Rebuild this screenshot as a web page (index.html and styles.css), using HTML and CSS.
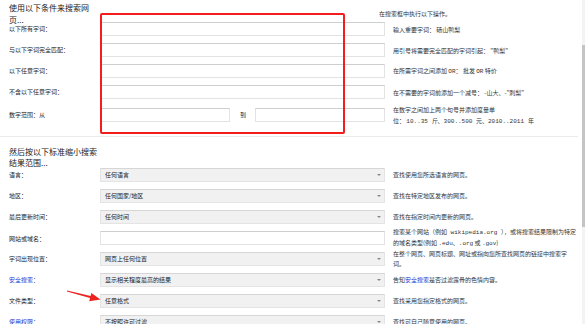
FILE: index.html
```html
<!DOCTYPE html>
<html lang="zh-CN">
<head>
    <meta charset="UTF-8">
    <meta name="viewport" content="width=device-width, initial-scale=1.0">
    <title>高级搜索</title>
    <link rel="stylesheet" href="styles.css">
</head>
<body>
    <div class="page">
        <div class="head-row first">
            <h3 class="section-title">使用以下条件来搜索网页...</h3>
            <div></div>
            <div class="head-note">在搜索框中执行以下操作。</div>
        </div>

        <div class="row shifted">
            <label class="label">以下所有字词：</label>
            <input type="text" class="field">
            <div class="note">输入重要字词： 砀山鸭梨</div>
        </div>
        <div class="row shifted">
            <label class="label">与以下字词完全匹配：</label>
            <input type="text" class="field">
            <div class="note">用引号将需要完全匹配的字词引起： "鸭梨"</div>
        </div>
        <div class="row shifted">
            <label class="label">以下任意字词：</label>
            <input type="text" class="field">
            <div class="note">在所需字词之间添加 <span class="mono">OR</span>： 批发 <span class="mono">OR</span> 特价</div>
        </div>
        <div class="row shifted">
            <label class="label">不含以下任意字词：</label>
            <input type="text" class="field">
            <div class="note">在不需要的字词前添加一个减号： -山大、-"刺梨"</div>
        </div>
        <div class="row shifted">
            <label class="label">数字范围：从</label>
            <div class="range">
                <input type="text" class="field">
                <span class="range-to">到</span>
                <input type="text" class="field">
            </div>
            <div class="note">在数字之间加上两个句号并添加度量单<span class="keep">位： <span class="mono">10..35 斤</span>、<span class="mono">300..500 元</span>、<span class="mono">2010..2011 年</span></span></div>
        </div>

        <hr class="divider">

        <div class="head-row second">
            <h3 class="section-title">然后按以下标准缩小搜索结果范围...</h3>
        </div>

        <div class="row">
            <label class="label">语言：</label>
            <div class="select"><span>任何语言</span><i class="caret"></i></div>
            <div class="note">查找使用您所选语言的网页。</div>
        </div>
        <div class="row">
            <label class="label">地区：</label>
            <div class="select"><span>任何国家/地区</span><i class="caret"></i></div>
            <div class="note">查找在特定地区发布的网页。</div>
        </div>
        <div class="row">
            <label class="label">最后更新时间：</label>
            <div class="select"><span>任何时间</span><i class="caret"></i></div>
            <div class="note">查找在指定时间内更新的网页。</div>
        </div>
        <div class="row">
            <label class="label">网站或域名：</label>
            <input type="text" class="field">
            <div class="note">搜索某个网站（例如<span class="mono"> wikipedia.org </span>），或将搜索结果限制为特定的域名类型(例如 <span class="mono">.edu</span>、<span class="mono">.org</span> 或 <span class="mono">.gov</span>)</div>
        </div>
        <div class="row">
            <label class="label">字词出现位置：</label>
            <div class="select"><span>网页上任何位置</span><i class="caret"></i></div>
            <div class="note">在整个网页、网页标题、网址或指向您所查找网页的链接中搜索字词。</div>
        </div>
        <div class="row">
            <a class="label link" href="#">安全搜索：</a>
            <div class="select"><span>显示相关程度最高的结果</span><i class="caret"></i></div>
            <div class="note">告知<a class="link" href="#">安全搜索</a>是否过滤露骨的色情内容。</div>
        </div>
        <div class="row">
            <label class="label">文件类型：</label>
            <div class="select"><span>任意格式</span><i class="caret"></i></div>
            <div class="note">查找采用您指定格式的网页。</div>
        </div>
        <div class="row">
            <a class="label link" href="#">使用权限：</a>
            <div class="select"><span>不按照许可过滤</span><i class="caret"></i></div>
            <div class="note">查找可自己随意使用的网页。</div>
        </div>
    </div>

    <!-- annotations drawn over the page -->
    <div class="highlight"></div>
    <svg class="arrow" width="45" height="22" viewBox="0 0 45 22">
        <polygon points="7.1,6.6 30.6,12 31.4,8.9 40.5,15.6 29.2,17.2 30,14 6.9,7.4" fill="#ec2320"/>
    </svg>

    <div class="scrollbar"><div class="thumb"></div></div>
</body>
</html>
```

FILE: styles.css
```css
body {
    margin: 0;
    height: 324px;
    overflow: hidden;
    background: #fff;
    font-family: "Noto Sans CJK SC", "Liberation Sans", sans-serif;
    color: #222;
}
.page {
    width: 578px;
    box-sizing: border-box;
    padding-left: 9px;
}
.head-row,
.row {
    display: grid;
    grid-template-columns: 91px 285px 1fr;
    align-items: center;
}
.head-row.first {
    height: 18px;
}
.head-row.second {
    height: 27px;
    align-items: start;
}
.section-title {
    margin: 0;
    font-size: 8px;
    font-weight: normal;
    line-height: 11.5px;
    color: #222;
    align-self: start;
}
.first .section-title {
    padding-top: 2px;
}
.second .section-title {
    padding-top: 9px;
    line-height: 11px;
}
.head-note {
    font-size: 6px;
    color: #333;
    margin-left: -6px;
    padding-top: 1px;
}
.row {
    height: 21px;
}
.label {
    font-size: 6px;
    color: #222;
    text-decoration: none;
}
.link {
    color: #2436d0;
    text-decoration: none;
}
.field {
    box-sizing: border-box;
    height: 14px;
    width: 100%;
    margin: 0;
    padding: 0 4px;
    border: 1px solid #e3e3e3;
    border-top-color: #cfcfcf;
    background: #fff;
    font-size: 6px;
}
.range {
    display: flex;
    align-items: center;
}
.range .field {
    flex: 1;
}
.range-to {
    font-size: 6px;
    margin: 0 9px 0 10px;
}
.select {
    box-sizing: border-box;
    height: 14px;
    display: flex;
    align-items: center;
    justify-content: space-between;
    padding: 0 3px 0 4px;
    border: 1px solid #e4e4e4;
    border-top-color: #d6d6d6;
    background: #f1f1f1;
    font-size: 6px;
    color: #222;
}
.caret {
    width: 0;
    height: 0;
    border-left: 2px solid transparent;
    border-right: 2px solid transparent;
    border-top: 2.5px solid #888;
}
.note {
    font-size: 6px;
    line-height: 10px;
    color: #333;
    padding-left: 8px;
}
.shifted .note {
    padding-top: 3px;
    line-height: 10.5px;
}
.mono {
    font-family: "Liberation Mono", monospace;
}
.keep {
    white-space: nowrap;
}
.divider {
    margin: 13px 0 0 -9px;
    border: 0;
    border-top: 1px solid #ebebeb;
}
.highlight {
    position: absolute;
    left: 100px;
    top: 13px;
    width: 245px;
    height: 121px;
    box-sizing: border-box;
    border: 2px solid #f41d1d;
    border-radius: 2px;
}
.arrow {
    position: absolute;
    left: 60px;
    top: 284px;
}
.scrollbar {
    position: fixed;
    top: 0;
    right: 0;
    width: 3px;
    height: 324px;
    background: #f3f3f3;
}
.thumb {
    margin-top: 45px;
    height: 182px;
    background: #c4c4c4;
}
```
